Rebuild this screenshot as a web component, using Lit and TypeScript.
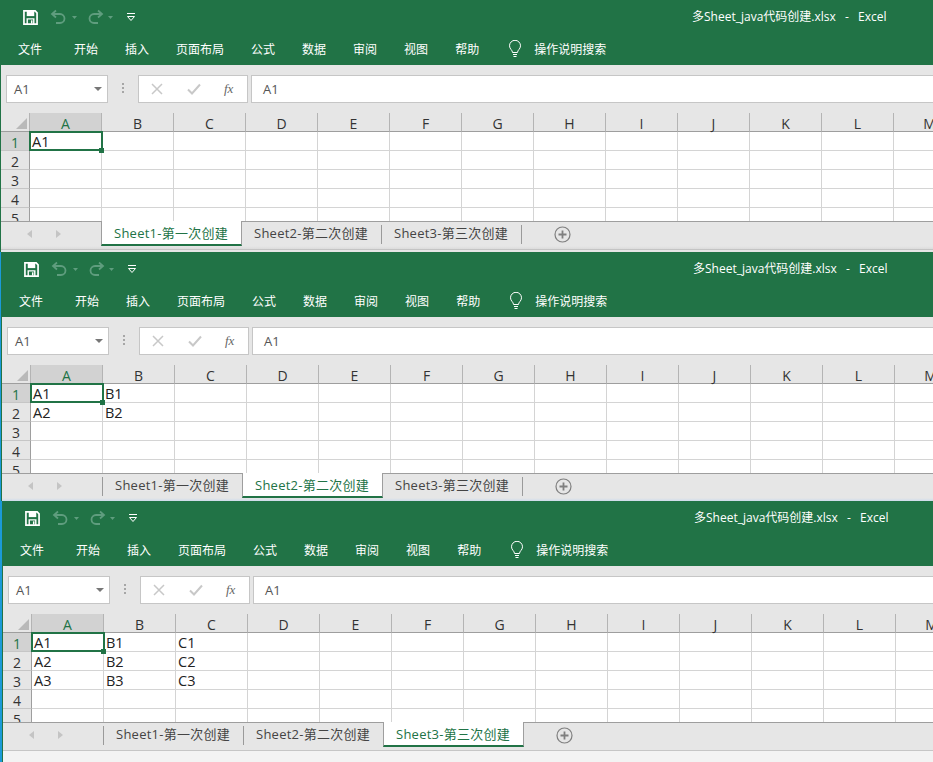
import { LitElement, html, css } from "lit";
import { customElement, property } from "lit/decorators.js";

const COLS = "ABCDEFGHIJKLM".split("");
const MENUS = ["文件", "开始", "插入", "页面布局", "公式", "数据", "审阅", "视图", "帮助"];
const TABS = ["Sheet1-第一次创建", "Sheet2-第二次创建", "Sheet3-第三次创建"];

@customElement("excel-window")
class ExcelWindow extends LitElement {
  @property({ type: Number }) offset = 0;
  @property({ type: Number }) active = 0;
  @property({ type: Number }) filledRows = 1;
  @property({ type: Number }) filledCols = 1;
  @property() foot = "a";

  static styles = css`
    :host { display: block; font-family: "Open Sans", "Noto Sans CJK SC", sans-serif; }
    .outer { display: flex; width: 940px; background: #1b9ad8; }
    .win { flex: none; width: 940px; border-left: 1px solid #217346; background: #e6e6e6; box-sizing: border-box; }
    .green { background: #217346; height: 65px; color: #fff; font-size: 12px; }
    .qat { height: 34px; display: flex; align-items: center; padding-left: 22px; }
    .qat svg { display: block; flex: none; }
    .save { margin-right: 12px; }
    .redo { margin-left: 8px; }
    .custom { margin-left: 12px; }
    .title { margin-left: 556px; margin-bottom: 2px; white-space: pre; font-size: 12px; word-spacing: 1.5px; }
    .menu { display: flex; align-items: center; height: 30px; padding-left: 17px; gap: 27px; }
    .menu span:first-child { margin-right: 5px; }
    .tell { display: flex; align-items: center; gap: 12px; margin-left: 2px; }
    .bulb { display: block; }
    .fbar { height: 48px; display: flex; align-items: flex-start; padding: 10px 0 0 5px; box-sizing: border-box; color: #555; font-size: 13px; }
    .box { background: #fff; border: 1px solid #c6c6c6; height: 28px; box-sizing: border-box; display: flex; align-items: center; }
    .name { width: 102px; padding: 0 5px 0 7px; justify-content: space-between; }
    .caret { width: 0; height: 0; border: 4px solid transparent; border-top: 4px solid #777; border-bottom: 0; }
    .dots { width: 30px; display: flex; flex-direction: column; align-items: center; gap: 2px; padding-top: 8px; }
    .dots i { width: 2px; height: 2px; background: #a6a6a6; display: block; }
    .fx { width: 110px; padding-left: 12px; }
    .fx svg { display: block; flex: none; }
    .check { margin-left: 24px; }
    .fx em { font: italic 13px "Liberation Serif", serif; color: #666; margin-left: 23px; }
    .input { flex: 1; margin-left: 3px; padding-left: 11px; }
    .grid { display: grid; grid-template-columns: 29px repeat(13, 72px); grid-auto-rows: 19px; height: 108px; overflow: hidden; background: #fff; font-size: 14.5px; color: #222; }
    .hd { background: #e6e6e6; box-sizing: border-box; border-right: 1px solid #b4b4b4; border-bottom: 1px solid #9e9e9e; display: flex; align-items: center; justify-content: center; color: #333; padding-top: 2px; font-size: 14px; }
    .hd.on { background: #d2d2d2; color: #217346; }
    .hd.rowh { border-right: 1px solid #9e9e9e; border-bottom: 1px solid #c6c6c6; }
    .corner { position: relative; }
    .corner::after { content: ""; position: absolute; right: 2px; bottom: 2px; border-style: solid; border-width: 0 0 11px 11px; border-color: transparent transparent #b9b9b9 transparent; }
    .cell { box-sizing: border-box; border-right: 1px solid #d4d4d4; border-bottom: 1px solid #d4d4d4; padding-left: 2px; line-height: 20px; white-space: nowrap; position: relative; }
    .sel { z-index: 2; }
    .sel::before { content: ""; position: absolute; left: -1px; top: -1px; right: -2px; bottom: -1px; border: 2px solid #217346; }
    .sel::after { content: ""; position: absolute; right: -3px; bottom: -3px; width: 5px; height: 5px; background: #217346; }
    .tabs { display: flex; height: 24px; border-top: 1px solid #9e9e9e; font-size: 13px; letter-spacing: 0.25px; color: #444; position: relative; }
    .nav { width: 100px; flex: none; display: flex; align-items: center; gap: 22px; padding-left: 26px; box-sizing: border-box; }
    .nav svg { display: block; }
    .tab { width: 140px; flex: none; box-sizing: border-box; padding-left: 13px; line-height: 22px; position: relative; white-space: nowrap; }
    .tab::after { content: ""; position: absolute; right: -1px; top: 3px; height: 19px; width: 1px; background: #9a9a9a; }
    .tab.first::before { content: ""; position: absolute; left: 0; top: 3px; height: 19px; width: 1px; background: #9a9a9a; }
    .tab.on { background: #fff; color: #217346; width: 141px; margin-right: -1px; margin-top: -1px; height: 25px; line-height: 24px; border-bottom: 2px solid #217346; border-left: 1px solid #9e9e9e; border-right: 1px solid #9e9e9e; padding-left: 12px; z-index: 1; }
    .tab.on::after, .tab.on::before, .tab.hide::after { display: none; }
    .plus { margin: 4px 0 0 33px; display: block; }
    .foot-a { height: 6px; background: linear-gradient(#e6e6e6 0, #dcdcdc 3px, #c4c4c4 3px, #c4c4c4 4px, #e6e6e6 4px); }
    .foot-b { height: 3px; background: linear-gradient(#e6e6e6 0, #cfdcec 100%); }
    .foot-c { height: 15px; background: linear-gradient(#e6e6e6 0, #e6e6e6 3px, #c6c6c6 3px, #c6c6c6 4px, #f3f3f3 4px); }
  `;

  private qat() {
    const dim = "#5f9d7e";
    return html`
      <svg class="save" width="15" height="15" viewBox="0 0 16 16">
        <path d="M1 1h12l2 2v12H1z" fill="none" stroke="#fff" stroke-width="1.8"/>
        <rect x="4" y="1" width="8" height="5.500" fill="#fff"/>
        <path d="M4.500 15V9.500h7V15" fill="none" stroke="#fff" stroke-width="1.500"/>
        <rect x="8.500" y="11" width="1.600" height="3.500" fill="#fff"/>
      </svg>
      <svg width="28" height="16" viewBox="0 0 28 16">
        <path d="M6 1.500 2 5 6 8.500M2.500 5h7.500a4.500 4.500 0 0 1 0 9H6" fill="none" stroke="${dim}" stroke-width="1.800"/>
        <path d="M22 7h5l-2.500 3z" fill="${dim}"/>
      </svg>
      <svg class="redo" width="28" height="16" viewBox="0 0 28 16">
        <path d="M12 1.500 16 5 12 8.500M15.500 5H8a4.500 4.500 0 0 0 0 9h4" fill="none" stroke="${dim}" stroke-width="1.800"/>
        <path d="M22 7h5l-2.500 3z" fill="${dim}"/>
      </svg>
      <svg class="custom" width="10" height="10" viewBox="0 0 10 10">
        <path d="M1 1.500h8" stroke="#fff" stroke-width="1"/>
        <path d="M1.500 4.500h7L5 8.500z" fill="none" stroke="#fff" stroke-width="1"/>
      </svg>
    `;
  }

  private cell(r: number, c: number) {
    const filled = r < this.filledRows && c < this.filledCols;
    const sel = r === 0 && c === 0;
    return html`<div class="cell ${sel ? "sel" : ""}">${filled ? COLS[c] + (r + 1) : ""}</div>`;
  }

  render() {
    return html`<div class="outer" style="margin-left:${this.offset}px">
      <div class="win">
        <div class="green">
          <div class="qat">${this.qat()}<span class="title">多Sheet_java代码创建.xlsx  -  Excel</span></div>
          <div class="menu">
            ${MENUS.map((m) => html`<span>${m}</span>`)}
            <span class="tell">
              <svg class="bulb" width="14" height="18" viewBox="0 0 14 18">
                <path d="M4.500 12.500C4.500 10 1.500 9 1.500 5.800a5.500 5.500 0 0 1 11 0c0 3.200-3 4.200-3 6.700z" fill="none" stroke="#fff" stroke-width="1"/>
                <path d="M5 14.500h4M5.500 16.500h3" stroke="#fff" stroke-width="1"/>
              </svg>
              <span>操作说明搜索</span>
            </span>
          </div>
        </div>
        <div class="fbar">
          <div class="box name"><span>A1</span><span class="caret"></span></div>
          <div class="dots"><i></i><i></i><i></i></div>
          <div class="box fx">
            <svg width="12" height="12" viewBox="0 0 12 12"><path d="M1 1l10 10M11 1L1 11" stroke="#c8c8c8" stroke-width="1.500"/></svg>
            <svg class="check" width="14" height="12" viewBox="0 0 14 12"><path d="M1 6.500l4 4 8-9" fill="none" stroke="#c8c8c8" stroke-width="2"/></svg>
            <em>fx</em>
          </div>
          <div class="box input">A1</div>
        </div>
        <div class="grid">
          <div class="hd corner"></div>
          ${COLS.map((c, i) => html`<div class="hd ${i === 0 ? "on" : ""}">${c}</div>`)}
          ${[0, 1, 2, 3, 4].map(
            (r) => html`<div class="hd rowh ${r === 0 ? "on" : ""}">${r + 1}</div>
              ${COLS.map((_, c) => this.cell(r, c))}`
          )}
        </div>
        <div class="tabs">
          <div class="nav">
            <svg width="6" height="8" viewBox="0 0 6 8"><path d="M5 0v8L0 4z" fill="#c4c4c4"/></svg>
            <svg width="6" height="8" viewBox="0 0 6 8"><path d="M1 0v8l5-4z" fill="#c4c4c4"/></svg>
          </div>
          ${TABS.map(
            (t, i) => html`<div class="tab ${i === this.active ? "on" : ""} ${i === 0 ? "first" : ""} ${i + 1 === this.active ? "hide" : ""}">${t}</div>`
          )}
          <svg class="plus" width="17" height="17" viewBox="0 0 17 17">
            <circle cx="8.500" cy="8.500" r="7.500" fill="none" stroke="#7f7f7f" stroke-width="1.200"/>
            <path d="M8.500 4.500v8M4.500 8.500h8" stroke="#7f7f7f" stroke-width="1.800"/>
          </svg>
        </div>
        <div class="foot-${this.foot}"></div>
      </div>
    </div>`;
  }
}

@customElement("app-root")
class AppRoot extends LitElement {
  static styles = css`
    :host { display: block; width: 933px; height: 762px; overflow: hidden; background: #1b9ad8; }
  `;
  render() {
    return html`
      <excel-window .offset=${0} .active=${0} .filledRows=${1} .filledCols=${1} foot="a"></excel-window>
      <excel-window .offset=${1} .active=${1} .filledRows=${2} .filledCols=${2} foot="b"></excel-window>
      <excel-window .offset=${2} .active=${2} .filledRows=${3} .filledCols=${3} foot="c"></excel-window>
    `;
  }
}
